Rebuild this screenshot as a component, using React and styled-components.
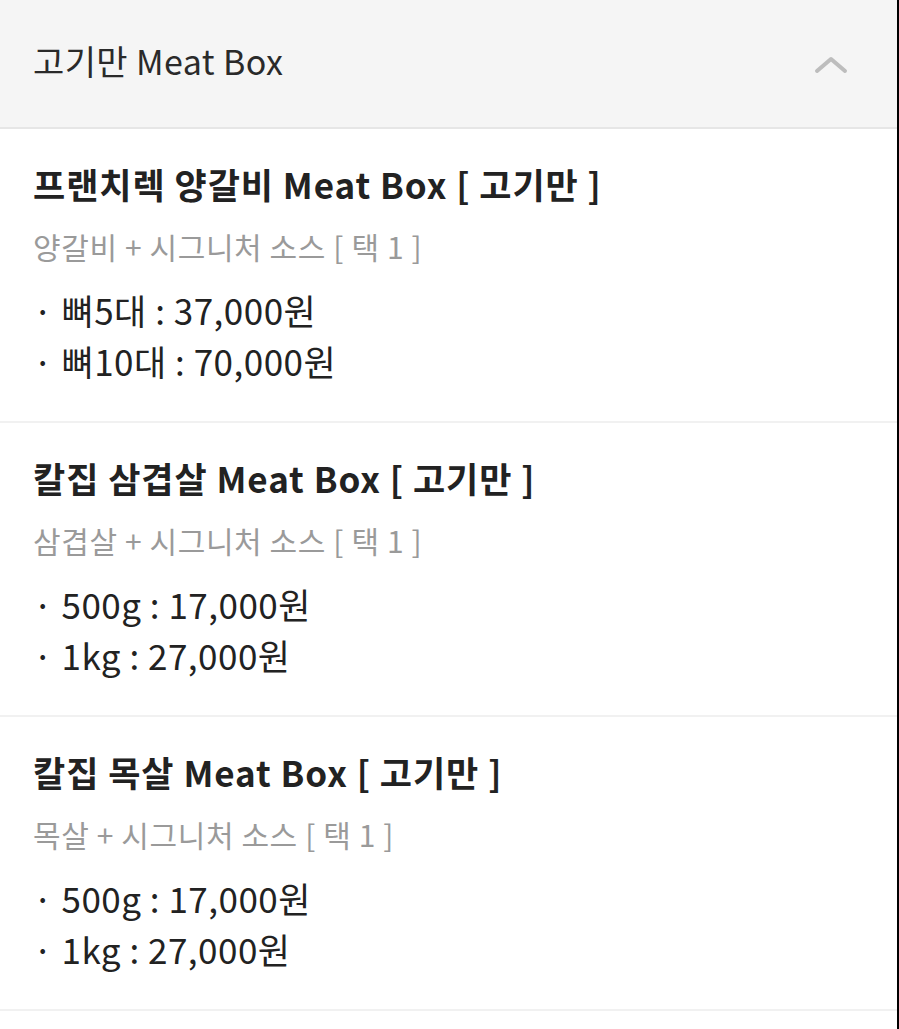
import React from "react";
import styled, { createGlobalStyle } from "styled-components";

const Global = createGlobalStyle`
  html, body { margin: 0; padding: 0; background: #fff; }
  body { font-family: "Noto Sans CJK KR", "Noto Sans", sans-serif; }
  * { box-sizing: border-box; }
`;

const Page = styled.div`
  width: 899px;
  min-height: 1029px;
  border-right: 2px solid #000;
  background: #fff;
`;

const Header = styled.div`
  height: 129px;
  display: flex;
  align-items: center;
  justify-content: space-between;
  padding: 0 48px 6px 33px;
  background: #f5f5f5;
  border-bottom: 2px solid #e6e6e6;
`;

const HeaderTitle = styled.h2`
  margin: 0;
  font-size: 34px;
  font-weight: 400;
  color: #2a2a2a;
  letter-spacing: 0.4px;
`;

const Chevron = styled.svg`
  width: 36px;
  height: 22px;
  display: block;
  margin-top: 6px;
`;

const Item = styled.section`
  padding: 31px 33px 35px;
  border-bottom: 2px solid #f1f1f1;
`;

const Title = styled.h3`
  margin: 0;
  font-size: 35px;
  line-height: 48px;
  font-weight: 700;
  color: #222;
  letter-spacing: 0.95px;
`;

const Sub = styled.p`
  margin: 18px 0 0;
  font-size: 30px;
  line-height: 40px;
  font-weight: 400;
  color: #9a9a9a;
  letter-spacing: 0.6px;
`;

const Prices = styled.ul`
  margin: 18px 0 0;
  padding: 0;
  list-style: none;
`;

const Price = styled.li`
  font-size: 35px;
  line-height: 51px;
  color: #222;
  letter-spacing: 0.5px;
`;

const items = [
  {
    title: "프랜치렉 양갈비 Meat Box [ 고기만 ]",
    sub: "양갈비 + 시그니처 소스 [ 택 1 ]",
    prices: ["뼈5대 : 37,000원", "뼈10대 : 70,000원"],
  },
  {
    title: "칼집 삼겹살 Meat Box [ 고기만 ]",
    sub: "삼겹살 + 시그니처 소스 [ 택 1 ]",
    prices: ["500g : 17,000원", "1kg : 27,000원"],
  },
  {
    title: "칼집 목살 Meat Box [ 고기만 ]",
    sub: "목살 + 시그니처 소스 [ 택 1 ]",
    prices: ["500g : 17,000원", "1kg : 27,000원"],
  },
];

export default function App() {
  return (
    <>
      <Global />
      <Page>
        <Header>
          <HeaderTitle>고기만 Meat Box</HeaderTitle>
          <Chevron viewBox="0 0 36 22">
            <polyline
              points="4,18 18,6 32,18"
              fill="none"
              stroke="#bdbdbd"
              strokeWidth="4"
              strokeLinecap="round"
              strokeLinejoin="round"
            />
          </Chevron>
        </Header>
        {items.map((it) => (
          <Item key={it.title}>
            <Title>{it.title}</Title>
            <Sub>{it.sub}</Sub>
            <Prices>
              {it.prices.map((p) => (
                <Price key={p}>· {p}</Price>
              ))}
            </Prices>
          </Item>
        ))}
      </Page>
    </>
  );
}
